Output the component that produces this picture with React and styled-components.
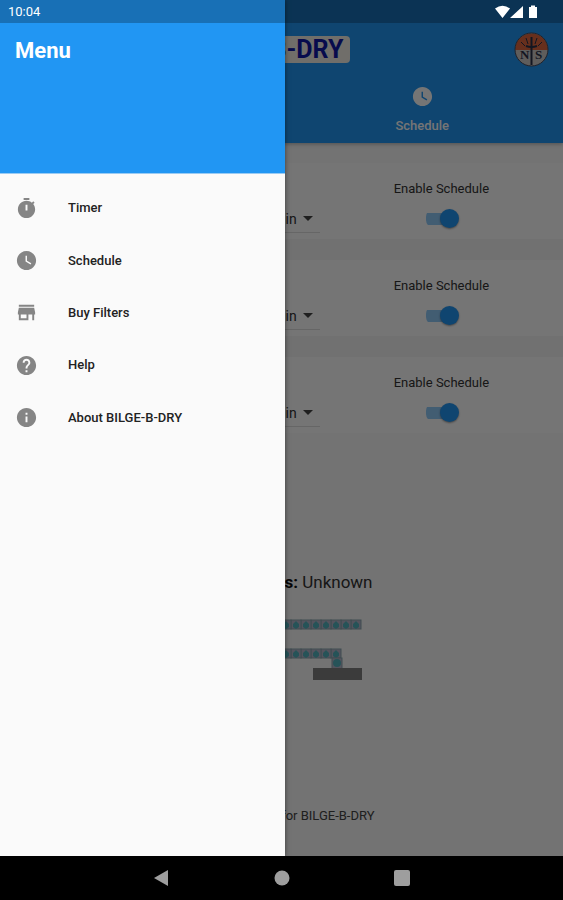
import React from "react";
import styled, { createGlobalStyle } from "styled-components";

const GlobalStyle = createGlobalStyle`
  *, *::before, *::after { box-sizing: border-box; }
  body { margin: 0; background: #000; font-family: Roboto, "Liberation Sans", sans-serif; }
  button, select, input { font: inherit; margin: 0; }
`;

const Device = styled.div`
  display: flex;
  flex-direction: column;
  min-height: 100vh;
  background: #000;
`;

const Stage = styled.div`
  position: relative;
  flex: 1;
  display: flex;
  flex-direction: column;
  overflow: hidden;
  background: #fafafa;
`;

const AppBar = styled.header`
  background: #2196f3;
  padding-top: 23px;
  height: 143px;
  display: flex;
  flex-direction: column;
  box-shadow: 0 1px 4px rgba(0, 0, 0, 0.3);
`;

const TitleRow = styled.div`
  display: grid;
  grid-template-columns: 1fr auto 1fr;
  align-items: center;
  height: 53px;
  padding: 0 14px;
`;

const Brand = styled.h1`
  grid-column: 2;
  margin: 0;
  width: 136px;
  height: 27px;
  padding-right: 6px;
  border-radius: 4px;
  background: #f3f0e6;
  color: #101aa8;
  display: flex;
  align-items: center;
  justify-content: flex-end;
  overflow: hidden;
  white-space: nowrap;
  font-size: 25px;
  line-height: 27px;
  font-weight: 700;
`;

const BadgeButton = styled.button`
  justify-self: end;
  padding: 0;
  border: 0;
  background: none;
  display: flex;
`;

const Tabs = styled.nav`
  flex: 1;
  display: grid;
  grid-template-columns: 1fr 1fr;
`;

const Tab = styled.button`
  grid-column: 2;
  border: 0;
  padding: 9px 0 0;
  background: none;
  color: #fff;
  display: flex;
  flex-direction: column;
  align-items: center;
  gap: 10px;
  font-size: 13px;
  line-height: 16px;
  font-weight: 500;
`;

const Main = styled.main`
  flex: 1;
  display: flex;
  flex-direction: column;
`;

const Cards = styled.section`
  margin-top: 20px;
  min-height: 270px;
  display: grid;
  grid-auto-rows: 1fr;
  gap: 21px;
  background: #f6f6f6;
`;

const Card = styled.div`
  background: #fff;
  display: grid;
  grid-template-columns: 4fr 3fr;
`;

const Picker = styled.label`
  position: relative;
  justify-self: end;
  align-self: end;
  width: 80px;
  height: 28px;
  margin: 0 2px 6px 0;
  border-bottom: 1px solid #dedede;
`;

const Select = styled.select`
  appearance: none;
  width: 100%;
  height: 27px;
  padding: 0 23px 0 0;
  border: 0;
  background: none;
  color: #333;
  font-size: 14px;
  text-align: right;
  text-align-last: right;
`;

const Caret = styled.svg`
  position: absolute;
  right: 7px;
  top: 11px;
  pointer-events: none;
`;

const Toggle = styled.label`
  display: flex;
  flex-direction: column;
  align-items: center;
  padding: 18px 2px 0 0;
  gap: 12px;
  color: #333;
  font-size: 13px;
  line-height: 16px;
`;

const Switch = styled.input`
  appearance: none;
  width: 30px;
  height: 19px;
  padding: 0;
  background: linear-gradient(#90caf9, #90caf9) center / 100% 12px no-repeat;
  border-radius: 8px;
  display: flex;
  justify-content: flex-end;
  &::before {
    content: "";
    flex: none;
    width: 19px;
    height: 19px;
    margin-right: -3px;
    border-radius: 50%;
    background: #2196f3;
    box-shadow: 0 1px 2px rgba(0, 0, 0, 0.4);
  }
`;

const SwitchSlot = styled.span`
  display: flex;
`;

const Status = styled.p`
  margin: 139px auto 0;
  width: 182px;
  text-align: right;
  font-size: 17px;
  line-height: 20px;
  color: #333;
  b { color: #111; }
`;

const Diagram = styled.svg`
  display: block;
  width: 162px;
  height: 66px;
  margin: 26px auto 0;
`;

const Note = styled.p`
  margin: auto auto 32px;
  width: 186px;
  text-align: right;
  font-size: 13px;
  line-height: 16px;
  color: #444;
`;

const Scrim = styled.div`
  position: absolute;
  inset: 0;
  background: rgba(0, 0, 0, 0.54);
`;

const Drawer = styled.aside`
  position: absolute;
  top: 0;
  bottom: 0;
  left: 0;
  width: 285px;
  background: #fafafa;
  box-shadow: 0 0 5px rgba(0, 0, 0, 0.5);
`;

const DrawerHeader = styled.div`
  height: 174px;
  padding: 39px 15px 0;
  background: #2196f3;
  border-bottom: 1px solid #9acbf3;
`;

const DrawerTitle = styled.h2`
  margin: 0;
  color: #fff;
  font-size: 22px;
  line-height: 24px;
  font-weight: 700;
`;

const MenuList = styled.ul`
  list-style: none;
  margin: 8px 0 0;
  padding: 0;
  min-height: 262px;
  display: grid;
  grid-auto-rows: 1fr;
`;

const MenuItem = styled.li`
  display: flex;
`;

const MenuLink = styled.a`
  flex: 1;
  display: flex;
  align-items: center;
  gap: 30px;
  padding: 0 15px;
  color: #222;
  font-size: 13px;
  line-height: 16px;
  font-weight: 500;
  text-decoration: none;
`;

const StatusBar = styled.div`
  position: absolute;
  top: 0;
  left: 0;
  right: 0;
  height: 23px;
  padding: 1px 24px 0 8px;
  display: flex;
  align-items: center;
  justify-content: space-between;
  background: rgba(0, 0, 0, 0.25);
  color: #fff;
  font-size: 13px;
  line-height: 16px;
`;

const NavBar = styled.nav`
  height: 44px;
  display: grid;
  grid-template-columns: repeat(3, 120px);
  justify-content: center;
`;

const NavButton = styled.button`
  border: 0;
  padding: 0;
  background: none;
  display: flex;
  align-items: center;
  justify-content: center;
`;

const icons = {
  timer: "M15 1H9v2h6V1zM11 14h2V8h-2v6zM19.030 7.390l1.420-1.420c-.430-.510-.9-.990-1.410-1.410l-1.420 1.420C16.070 4.740 14.120 4 12 4c-4.970 0-9 4.030-9 9s4.020 9 9 9 9-4.030 9-9c0-2.120-.740-4.070-1.970-5.610z",
  clock: "M12 2C6.500 2 2 6.500 2 12s4.500 10 10 10 10-4.500 10-10S17.500 2 12 2zm4.200 14.200L11 13V7h1.500v5.200l4.500 2.700-.8 1.300z",
  store: "M20 4H4v2h16V4zm1 10v-2l-1-5H4l-1 5v2h1v6h10v-6h4v6h2v-6h1zm-9 4H6v-4h6v4z",
  help: "M12 2C6.480 2 2 6.480 2 12s4.480 10 10 10 10-4.480 10-10S17.520 2 12 2zm1 17h-2v-2h2v2zm2.070-7.750-.9.920C13.450 12.900 13 13.500 13 15h-2v-.5c0-1.100.450-2.100 1.170-2.830l1.240-1.260c.370-.360.590-.860.590-1.410 0-1.100-.9-2-2-2s-2 .9-2 2H8c0-2.210 1.790-4 4-4s4 1.790 4 4c0 .880-.360 1.680-.930 2.250z",
  info: "M12 2C6.480 2 2 6.480 2 12s4.480 10 10 10 10-4.480 10-10S17.520 2 12 2zm1 15h-2v-6h2v6zm0-8h-2V7h2v2z",
};

function Icon({ name, color }) {
  return (
    <svg width="23" height="23" viewBox="0 0 24 24" fill={color} fillRule="evenodd" aria-hidden="true">
      <path d={icons[name]} />
    </svg>
  );
}

const menu = [
  ["timer", "Timer"],
  ["clock", "Schedule"],
  ["store", "Buy Filters"],
  ["help", "Help"],
  ["info", "About BILGE-B-DRY"],
];

function Badge() {
  return (
    <svg width="35" height="35" viewBox="0 0 35 35" aria-hidden="true">
      <circle cx="17.500" cy="17.500" r="16.500" fill="#cfcac8" />
      <path d="M1 18a16.500 16.500 0 0 1 33 0z" fill="#e0683f" />
      <circle cx="17.500" cy="17.500" r="16.500" fill="none" stroke="#4a4a5c" />
      <g stroke="#2b3048" fill="none">
        <path d="M17.500 5v28" strokeWidth="2" />
        <path d="M12 6l2 6M23 6l-2 6M7 10l4 4M28 10l-4 4" strokeWidth="1" />
        <path d="M12 14q5.500 2 11 0" strokeWidth="2" />
      </g>
      <g fill="#2b3048" fontFamily="Liberation Serif, serif" fontWeight="700" fontSize="13">
        <text x="6" y="27">N</text>
        <text x="21" y="27">S</text>
      </g>
    </svg>
  );
}

function HoseDiagram() {
  const cells = (count, y) =>
    Array.from({ length: count }, (_, i) => {
      const x = 150 - (14 - count) * 10 - i * 10;
      return (
        <g key={`${y}-${i}`}>
          <rect x={x} y={y} width="10" height="9" fill="#bab8ce" stroke="#8ba7b0" />
          <path d={`M${x + 5} ${y + 1}l3 3v3l-3 2-3-2v-3z`} fill="#54b5bf" />
        </g>
      );
    });
  return (
    <Diagram viewBox="0 0 162 66" aria-hidden="true">
      {cells(14, 2)}
      {cells(12, 31)}
      <rect x="131" y="40" width="10" height="11" fill="#bab8ce" stroke="#8ba7b0" />
      <circle cx="136" cy="45" r="4" fill="#54b5bf" />
      <rect x="112" y="50" width="49" height="12" fill="#808080" />
    </Diagram>
  );
}

export default function App() {
  return (
    <Device>
      <GlobalStyle />
      <Stage>
        <AppBar>
          <TitleRow>
            <Brand>B-DRY</Brand>
            <BadgeButton aria-label="NS">
              <Badge />
            </BadgeButton>
          </TitleRow>
          <Tabs>
            <Tab>
              <Icon name="clock" color="#fff" />
              Schedule
            </Tab>
          </Tabs>
        </AppBar>
        <Main>
          <Cards>
            {[1, 2, 3].map((n) => (
              <Card key={n}>
                <Picker>
                  <Select aria-label={`Duration ${n}`}>
                    <option>min</option>
                  </Select>
                  <Caret width="10" height="5" viewBox="0 0 10 5" aria-hidden="true">
                    <path d="M0 0h10L5 5z" fill="#444" />
                  </Caret>
                </Picker>
                <Toggle>
                  Enable Schedule
                  <SwitchSlot>
                    <Switch type="checkbox" role="switch" defaultChecked />
                  </SwitchSlot>
                </Toggle>
              </Card>
            ))}
          </Cards>
          <Status>
            <b>Status:</b> Unknown
          </Status>
          <HoseDiagram />
          <Note>for BILGE-B-DRY</Note>
        </Main>
        <Scrim />
        <Drawer>
          <DrawerHeader>
            <DrawerTitle>Menu</DrawerTitle>
          </DrawerHeader>
          <MenuList>
            {menu.map(([icon, label]) => (
              <MenuItem key={label}>
                <MenuLink href="#">
                  <Icon name={icon} color="#858585" />
                  {label}
                </MenuLink>
              </MenuItem>
            ))}
          </MenuList>
        </Drawer>
        <StatusBar>
          <span>10:04</span>
          <svg width="44" height="14" viewBox="0 0 44 14" fill="#fff" aria-hidden="true">
            <path d="M0 3.500Q7.500-2 15 3.500L7.500 13zM28 1v12H15zM34 2h2V0.500h4V2h2v11h-8z" />
          </svg>
        </StatusBar>
      </Stage>
      <NavBar>
        <NavButton aria-label="Back">
          <svg width="16" height="16" viewBox="0 0 16 16"><path d="M14 0v16L0 8z" fill="#9e9e9e" /></svg>
        </NavButton>
        <NavButton aria-label="Home">
          <svg width="16" height="16" viewBox="0 0 16 16"><circle cx="8" cy="8" r="7.500" fill="#9e9e9e" /></svg>
        </NavButton>
        <NavButton aria-label="Recent apps">
          <svg width="16" height="16" viewBox="0 0 16 16"><rect width="16" height="16" rx="2" fill="#9e9e9e" /></svg>
        </NavButton>
      </NavBar>
    </Device>
  );
}
